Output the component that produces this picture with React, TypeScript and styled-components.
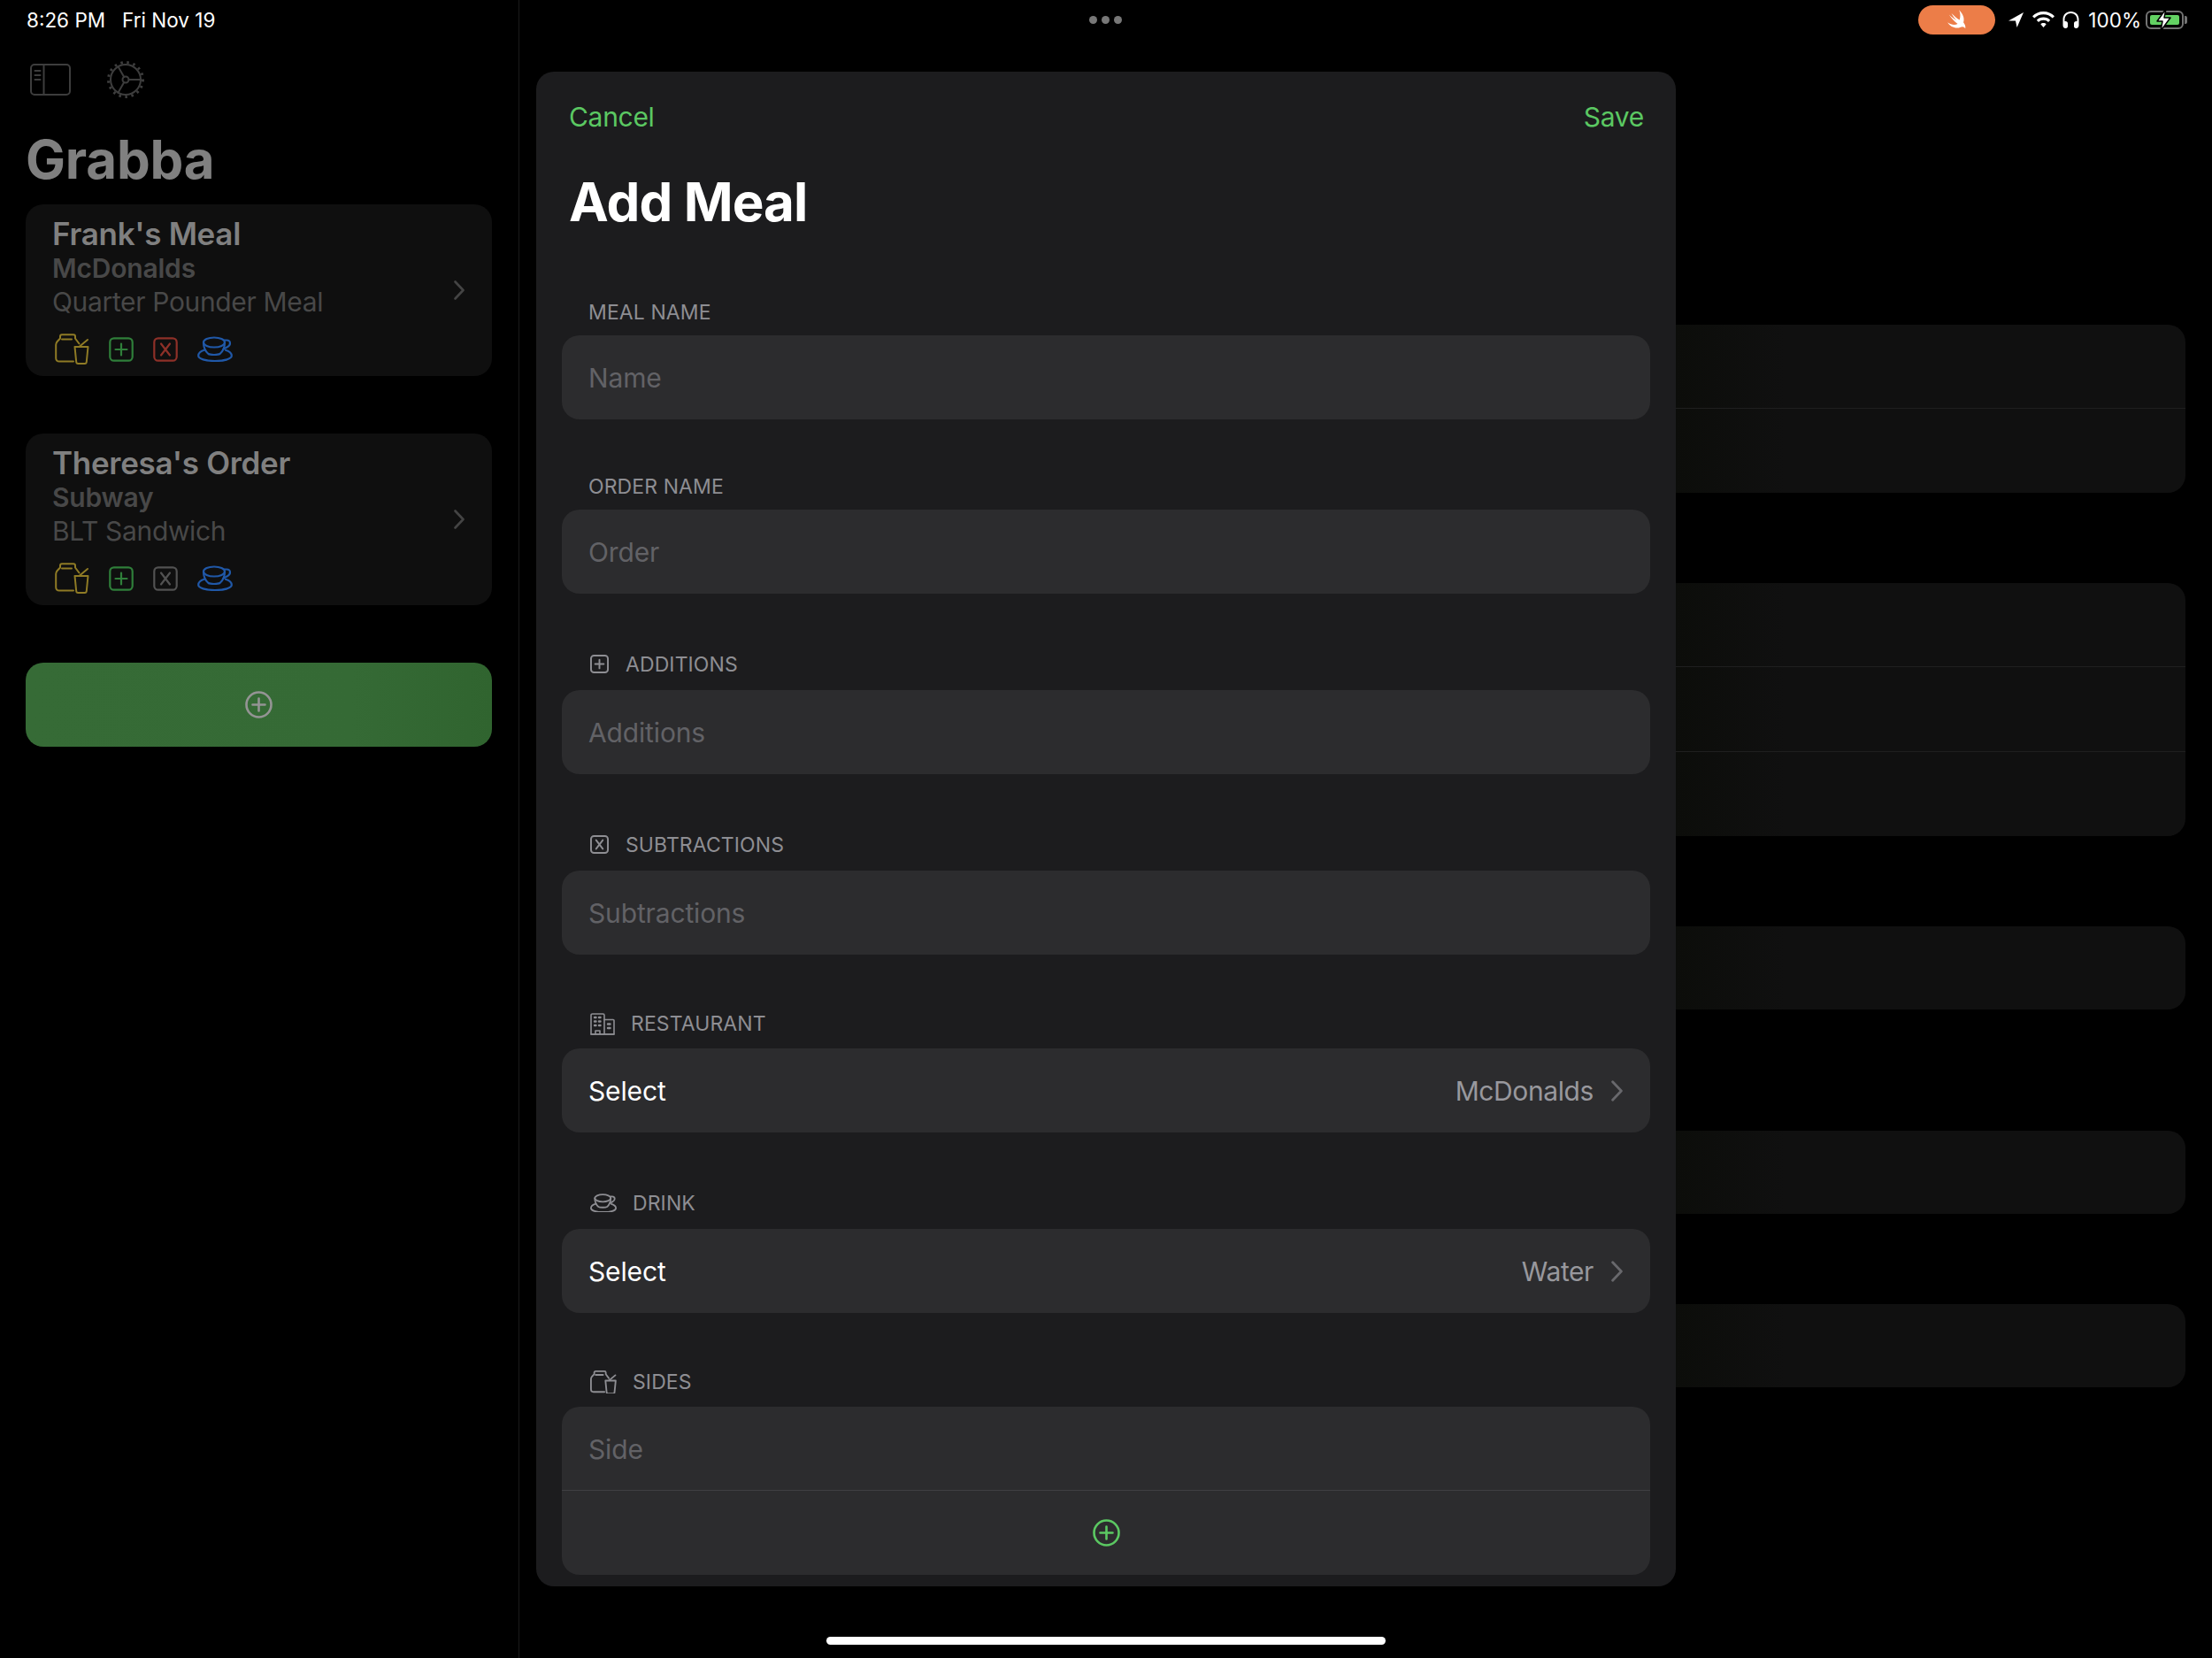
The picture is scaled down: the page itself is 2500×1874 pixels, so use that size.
import React, { FC } from "react";
import styled, { createGlobalStyle } from "styled-components";

const GlobalStyle = createGlobalStyle`
  html, body {
    margin: 0;
    padding: 0;
    background: #000;
  }
  * {
    box-sizing: border-box;
  }
`;

const Screen = styled.div`
  position: relative;
  width: 2500px;
  height: 1874px;
  display: flex;
  overflow: hidden;
  background: #000;
  font-family: Inter, "Liberation Sans", sans-serif;
`;

/* status bar */
const StatusBar = styled.div`
  position: absolute;
  top: 0;
  left: 0;
  right: 0;
  height: 44px;
  display: flex;
  align-items: center;
  justify-content: space-between;
  padding: 0 32px 0 30px;
  color: #fff;
  font-size: 22.5px;
`;
const StatusText = styled.div`
  display: flex;
  gap: 19px;
`;
const Dots = styled.div`
  position: absolute;
  left: 1231px;
  top: 18px;
  display: flex;
  gap: 5px;
`;
const Dot = styled.span`
  width: 9px;
  height: 9px;
  border-radius: 50%;
  background: #777;
`;
const StatusRight = styled.div`
  display: flex;
  align-items: center;
`;
const SwiftPill = styled.div`
  width: 87px;
  height: 33px;
  margin-right: 15px;
  border-radius: 17px;
  background: #ec7d48;
  display: flex;
  align-items: center;
  justify-content: center;
`;
const Battery = styled.div`
  position: relative;
  width: 43px;
  height: 21px;
  margin-left: 5px;
  padding: 3px;
  border: 2px solid #737373;
  border-radius: 6px;
  &::after {
    content: "";
    position: absolute;
    right: -6px;
    top: 4px;
    width: 3px;
    height: 9px;
    border-radius: 0 2px 2px 0;
    background: #737373;
  }
`;
const BatteryFill = styled.div`
  width: 100%;
  height: 100%;
  border-radius: 2px;
  background: #63d263;
`;
const BatteryBolt = styled.svg`
  position: absolute;
  left: 8px;
  top: -5px;
`;

/* sidebar */
const Sidebar = styled.aside`
  width: 587px;
  flex: none;
  display: flex;
  flex-direction: column;
  padding: 68px 30px 0 29px;
  border-right: 1px solid #1a1a1a;
`;
const Toolbar = styled.div`
  height: 44px;
  display: flex;
  align-items: center;
  gap: 40px;
  padding-left: 5px;
`;
const BigTitle = styled.h1`
  margin: 31px 0 14px;
  font-size: 60px;
  line-height: 74px;
  font-weight: 700;
  letter-spacing: -0.2px;
  color: #808080;
`;
const CardList = styled.div`
  display: flex;
  flex-direction: column;
  gap: 65px;
`;
const Card = styled.div`
  height: 194px;
  display: flex;
  align-items: center;
  justify-content: space-between;
  padding: 0 31px 0 30px;
  border-radius: 20px;
  background: #0f0f0f;
`;
const CardBody = styled.div`
  display: flex;
  flex-direction: column;
`;
const CardTitle = styled.div`
  font-size: 35px;
  line-height: 40px;
  font-weight: 600;
  letter-spacing: -0.3px;
  color: #808080;
`;
const CardPlace = styled.div`
  font-size: 30px;
  line-height: 38px;
  font-weight: 600;
  letter-spacing: -0.2px;
  color: #484848;
`;
const CardOrder = styled.div`
  font-size: 30px;
  line-height: 38px;
  letter-spacing: -0.35px;
  color: #484848;
`;
const CardIcons = styled.div`
  display: flex;
  align-items: center;
  height: 35px;
  margin-top: 17px;
  padding-left: 3px;
  gap: 22px;
`;
const AddButton = styled.div`
  height: 95px;
  margin-top: 65px;
  display: flex;
  align-items: center;
  justify-content: center;
  border-radius: 20px;
  background: linear-gradient(90deg, #366b36, #356a35 70%, #30642f);
`;

/* background detail list */
const Detail = styled.main`
  flex: 1;
  display: flex;
  flex-direction: column;
  gap: 102px;
  padding: 367px 30px 0 30px;
`;
const Panel = styled.div<{ $extra?: number }>`
  margin-top: ${(p) => p.$extra ?? 0}px;
  border-radius: 20px;
  overflow: hidden;
  background: linear-gradient(90deg, #0c0d0a 1277px, #101010 1400px);
`;
const PanelRow = styled.div`
  height: 94px;
  & + & {
    border-top: 1px solid #1f1f1f;
    height: 96px;
  }
`;

/* modal */
const Modal = styled.section`
  position: absolute;
  left: 606px;
  top: 81px;
  width: 1288px;
  height: 1712px;
  padding: 0 29px;
  border-radius: 20px;
  background: #1c1c1e;
`;
const ModalHeader = styled.div`
  display: flex;
  justify-content: space-between;
  padding: 32px 7px 0 8px;
  font-size: 30px;
  line-height: 38px;
  letter-spacing: -0.3px;
  color: #5bc862;
`;
const ModalTitle = styled.h2`
  margin: 40px 8px 60px;
  font-size: 60px;
  line-height: 74px;
  font-weight: 700;
  letter-spacing: -0.9px;
  color: #fff;
`;
const Form = styled.div`
  display: flex;
  flex-direction: column;
  gap: 48px;
`;
const SectionLabel = styled.div<{ $h: number; $gap: number }>`
  height: ${(p) => p.$h}px;
  display: flex;
  align-items: center;
  gap: ${(p) => p.$gap}px;
  padding-left: ${(p) => (p.$gap ? 32 : 30)}px;
  padding-top: 2px;
  font-size: 23px;
  letter-spacing: 0.1px;
  color: #8e8e93;
`;
const Group = styled.div`
  border-radius: 20px;
  background: #2c2c2e;
`;
const Row = styled.div<{ $divider?: boolean }>`
  height: 95px;
  display: flex;
  align-items: center;
  justify-content: space-between;
  padding: 0 31px 0 30px;
  font-size: 30px;
  letter-spacing: -0.15px;
  color: #fff;
  box-shadow: ${(p) => (p.$divider ? "inset 0 -1px 0 #3f3f42" : "none")};
`;
const CenterRow = styled(Row)`
  justify-content: center;
  padding: 0;
`;
const Placeholder = styled.span`
  color: #626266;
`;
const Value = styled.div`
  display: flex;
  align-items: center;
  gap: 20px;
  letter-spacing: -0.4px;
  color: #98989d;
`;
const HomeBar = styled.div`
  position: absolute;
  left: 934px;
  top: 1850px;
  width: 632px;
  height: 9px;
  border-radius: 5px;
  background: #fff;
`;

const LineIcon = styled.svg<{ $color: string }>`
  flex: none;
  fill: none;
  stroke: ${(p) => p.$color};
  stroke-linecap: round;
  stroke-linejoin: round;
`;
const SolidIcon = styled.svg`
  flex: none;
  fill: #fff;
`;
const StatusIcon = styled(SolidIcon)<{ $right: number }>`
  margin-right: ${(p) => p.$right}px;
`;

type IconProps = { color: string; size?: number; width?: number };

const Chevron: FC<{ color: string; w: number; h: number }> = ({ color, w, h }) => (
  <LineIcon $color={color} width={w} height={h} viewBox="0 0 12 22" strokeWidth={2.6}>
    <path d="M1.5 1.5 10.5 11 1.5 20.5" />
  </LineIcon>
);

const PlusCircle: FC<{ color: string }> = ({ color }) => (
  <LineIcon $color={color} width={31} height={31} viewBox="0 0 31 31" strokeWidth={2.6}>
    <circle cx="15.5" cy="15.5" r="14" />
    <path d="M15.5 8.5v14M8.5 15.5h14" />
  </LineIcon>
);

const PlusBox: FC<IconProps> = ({ color, size = 28 }) => (
  <LineIcon $color={color} width={size} height={size} viewBox="0 0 28 28" strokeWidth={size > 24 ? 2.2 : 2.6}>
    <rect x="1.3" y="1.3" width="25.4" height="25.4" rx="4.5" />
    <path d="M14 7.5v13M7.5 14h13" />
  </LineIcon>
);

const XBox: FC<IconProps> = ({ color, size = 28 }) => (
  <LineIcon $color={color} width={size} height={size} viewBox="0 0 28 28" strokeWidth={size > 24 ? 2.2 : 2.6}>
    <rect x="1.3" y="1.3" width="25.4" height="25.4" rx="4.5" />
    <path d="M9 7.5 19 20.5M19 7.5 9 20.5" />
  </LineIcon>
);

const BagCup: FC<IconProps> = ({ color, width = 39 }) => (
  <LineIcon
    $color={color}
    width={width}
    height={(width * 35) / 39}
    viewBox="0 0 39 35"
    strokeWidth={width > 30 ? 2 : 2.4}
  >
    <path d="M21 31.5H5c-2.4 0-3.8-1.4-3.8-3.8V12.8c0-1.5.6-2.8 1.5-3.8L6 5.5V3.2c0-1.3.7-2 2-2h13c1.3 0 2 .7 2 2v2.3l4.5 6" />
    <path d="M8 6.5h11" />
    <path d="M22.5 15h15l-1.7 17c-.1 1.2-.9 2-2 2h-7.6c-1.1 0-1.9-.8-2-2z" />
    <path d="M28 14.5 37 7" />
  </LineIcon>
);

const Teacup: FC<IconProps> = ({ color, width = 40 }) => (
  <LineIcon
    $color={color}
    width={width}
    height={(width * 29) / 40}
    viewBox="0 0 40 29"
    strokeWidth={width > 34 ? 2.2 : 2.4}
  >
    <ellipse cx="19" cy="7" rx="12" ry="5.5" />
    <path d="M7 7c0 6 2 10 5.5 13 2 1.3 11 1.3 13 0C29 17 31 13 31 7" />
    <path d="M30.5 4.5H33c2.5 0 4 1.5 4 3.5s-1.500 3.5-3.500 4.5l-4 2" />
    <path d="M8.500 15.500C4 16.800 1.200 19 1.200 22c0 3.600 8 6 18.800 6s18.800-2.400 18.800-6c0-3-2.500-5-6.800-6.300" />
  </LineIcon>
);

const Building: FC<{ color: string }> = ({ color }) => (
  <LineIcon $color={color} width={28} height={25} viewBox="0 0 28 25" strokeWidth={1.6}>
    <path d="M1 24V2.500C1 1.600 1.600 1 2.500 1h12c.9 0 1.500.6 1.500 1.500V24z" />
    <path d="M16 7.500h10c.6 0 1 .4 1 1V24H16" />
    <path d="M1 24h26M6 24v-4h5v4" />
    <path d="M5 5h1.500M10 5h1.500M5 9.500h1.500M10 9.500h1.500M5 14h1.500M10 14h1.500M20 12.500h2.500M20 17h2.500" strokeWidth={2.4} />
  </LineIcon>
);

const SidebarToggle: FC = () => (
  <LineIcon $color="#3d3d3d" width={46} height={36} viewBox="0 0 46 36" strokeWidth={2}>
    <rect x="1" y="1" width="44" height="34" rx="4" />
    <path d="M15.500 1v34M5.500 8h6M5.500 13h6M5.500 18h6" />
  </LineIcon>
);

const Gear: FC = () => (
  <LineIcon $color="#3d3d3d" width={44} height={44} viewBox="0 0 44 44" strokeWidth={2}>
    <circle cx="22" cy="22" r="17" />
    <circle cx="22" cy="22" r="19.500" strokeDasharray="2.500 4.630" strokeWidth={3} strokeLinecap="butt" />
    <circle cx="22" cy="22" r="3.500" />
    <path d="M25.500 22H39M20.200 19 13.500 7.300M20.200 25 13.500 36.700" />
  </LineIcon>
);

const meals = [
  { title: "Frank's Meal", place: "McDonalds", order: "Quarter Pounder Meal", xColor: "#8e3028" },
  { title: "Theresa's Order", place: "Subway", order: "BLT Sandwich", xColor: "#525252" },
];

const labelColor = "#8e8e93";

const App: FC = () => {
  return (
    <Screen>
      <GlobalStyle />
      <Sidebar>
        <Toolbar>
          <SidebarToggle />
          <Gear />
        </Toolbar>
        <BigTitle>Grabba</BigTitle>
        <CardList>
          {meals.map((m) => (
            <Card key={m.title}>
              <CardBody>
                <CardTitle>{m.title}</CardTitle>
                <CardPlace>{m.place}</CardPlace>
                <CardOrder>{m.order}</CardOrder>
                <CardIcons>
                  <BagCup color="#8f7b25" />
                  <PlusBox color="#2f7f3a" />
                  <XBox color={m.xColor} />
                  <Teacup color="#2058a8" />
                </CardIcons>
              </CardBody>
              <Chevron color="#444" w={12} h={22} />
            </Card>
          ))}
        </CardList>
        <AddButton>
          <PlusCircle color="#949494" />
        </AddButton>
      </Sidebar>

      <Detail>
        <Panel>
          <PanelRow />
          <PanelRow />
        </Panel>
        <Panel>
          <PanelRow />
          <PanelRow />
          <PanelRow />
        </Panel>
        <Panel>
          <PanelRow />
        </Panel>
        <Panel $extra={35}>
          <PanelRow />
        </Panel>
        <Panel>
          <PanelRow />
        </Panel>
      </Detail>

      <StatusBar>
        <StatusText>
          <span>8:26 PM</span>
          <span>Fri Nov 19</span>
        </StatusText>
        <StatusRight>
          <SwiftPill>
            <SolidIcon width={26} height={26} viewBox="0 0 24 24">
              <path d="M14 2C18 6 20 11 18.500 15C20 17 21 19 20.500 21.500C19.500 19.500 17.500 19 15.500 20C11 22 5 20 2 15C6 18 10 18 12.500 16.500C9 14 6 11 3.500 7C6.500 10 9.500 12 11.500 13C9.500 11 7.500 8.500 6 5.500C9 8.500 12 11 14.500 12.500C15.500 9 15.500 5.500 14 2Z" />
            </SolidIcon>
          </SwiftPill>
          <StatusIcon $right={10} width={17} height={17} viewBox="0 0 16 16">
            <path d="M0 9 16 0 9 16 7.500 9z" />
          </StatusIcon>
          <StatusIcon $right={9} width={25} height={18} viewBox="0 0 25 18">
            <path d="M12.500 0C17.500 0 21.700 2 25 5.300l-2.200 2.300C20 4.800 16.500 3.300 12.500 3.300S5 4.800 2.200 7.600L0 5.300C3.300 2 7.500 0 12.500 0zM12.500 6.500c3 0 5.700 1.200 7.700 3.200L18 12c-1.400-1.400-3.300-2.300-5.500-2.300S8.400 10.600 7 12L4.800 9.700c2-2 4.700-3.200 7.700-3.200zM12.500 13c1.300 0 2.400.5 3.200 1.300L12.500 18l-3.200-3.700c.8-.8 1.900-1.300 3.200-1.300z" />
          </StatusIcon>
          <StatusIcon $right={10} width={19} height={19} viewBox="0 0 19 19">
            <path d="M9.500 0C4.200 0 .5 3.800.5 9v6.500C.5 17.500 1.700 19 3.500 19s2.500-1 2.500-2.500v-3C6 12 5 11 3.500 11c-.5 0-.8.100-1 .2V9c0-4 3-7 7-7s7 3 7 7v2.200c-.2-.1-.5-.2-1-.2C14 11 13 12 13 13.500v3c0 1.500.7 2.500 2.500 2.500s3-1.500 3-3.500V9c0-5.200-3.700-9-9-9z" />
          </StatusIcon>
          <span>100%</span>
          <Battery>
            <BatteryFill />
            <BatteryBolt width={22} height={27} viewBox="0 0 22 27">
              <path d="M13 1 3 15h6l-2 11 11-15h-7z" fill="#fff" stroke="#000" strokeWidth={1.5} strokeLinejoin="round" />
            </BatteryBolt>
          </Battery>
        </StatusRight>
      </StatusBar>
      <Dots>
        <Dot />
        <Dot />
        <Dot />
      </Dots>

      <Modal>
        <ModalHeader>
          <span>Cancel</span>
          <span>Save</span>
        </ModalHeader>
        <ModalTitle>Add Meal</ModalTitle>
        <Form>
          <div>
            <SectionLabel $h={54} $gap={0}>MEAL NAME</SectionLabel>
            <Group>
              <Row><Placeholder>Name</Placeholder></Row>
            </Group>
          </div>
          <div>
            <SectionLabel $h={54} $gap={0}>ORDER NAME</SectionLabel>
            <Group>
              <Row><Placeholder>Order</Placeholder></Row>
            </Group>
          </div>
          <div>
            <SectionLabel $h={61} $gap={19}>
              <PlusBox color={labelColor} size={21} />
              ADDITIONS
            </SectionLabel>
            <Group>
              <Row><Placeholder>Additions</Placeholder></Row>
            </Group>
          </div>
          <div>
            <SectionLabel $h={61} $gap={19}>
              <XBox color={labelColor} size={21} />
              SUBTRACTIONS
            </SectionLabel>
            <Group>
              <Row><Placeholder>Subtractions</Placeholder></Row>
            </Group>
          </div>
          <div>
            <SectionLabel $h={58} $gap={18}>
              <Building color={labelColor} />
              RESTAURANT
            </SectionLabel>
            <Group>
              <Row>
                <span>Select</span>
                <Value>
                  McDonalds
                  <Chevron color="#68686c" w={13} h={24} />
                </Value>
              </Row>
            </Group>
          </div>
          <div>
            <SectionLabel $h={61} $gap={18}>
              <Teacup color={labelColor} width={30} />
              DRINK
            </SectionLabel>
            <Group>
              <Row>
                <span>Select</span>
                <Value>
                  Water
                  <Chevron color="#68686c" w={13} h={24} />
                </Value>
              </Row>
            </Group>
          </div>
          <div>
            <SectionLabel $h={58} $gap={18}>
              <BagCup color={labelColor} width={30} />
              SIDES
            </SectionLabel>
            <Group>
              <Row $divider><Placeholder>Side</Placeholder></Row>
              <CenterRow>
                <PlusCircle color="#5bc862" />
              </CenterRow>
            </Group>
          </div>
        </Form>
      </Modal>
      <HomeBar />
    </Screen>
  );
};

export default App;
